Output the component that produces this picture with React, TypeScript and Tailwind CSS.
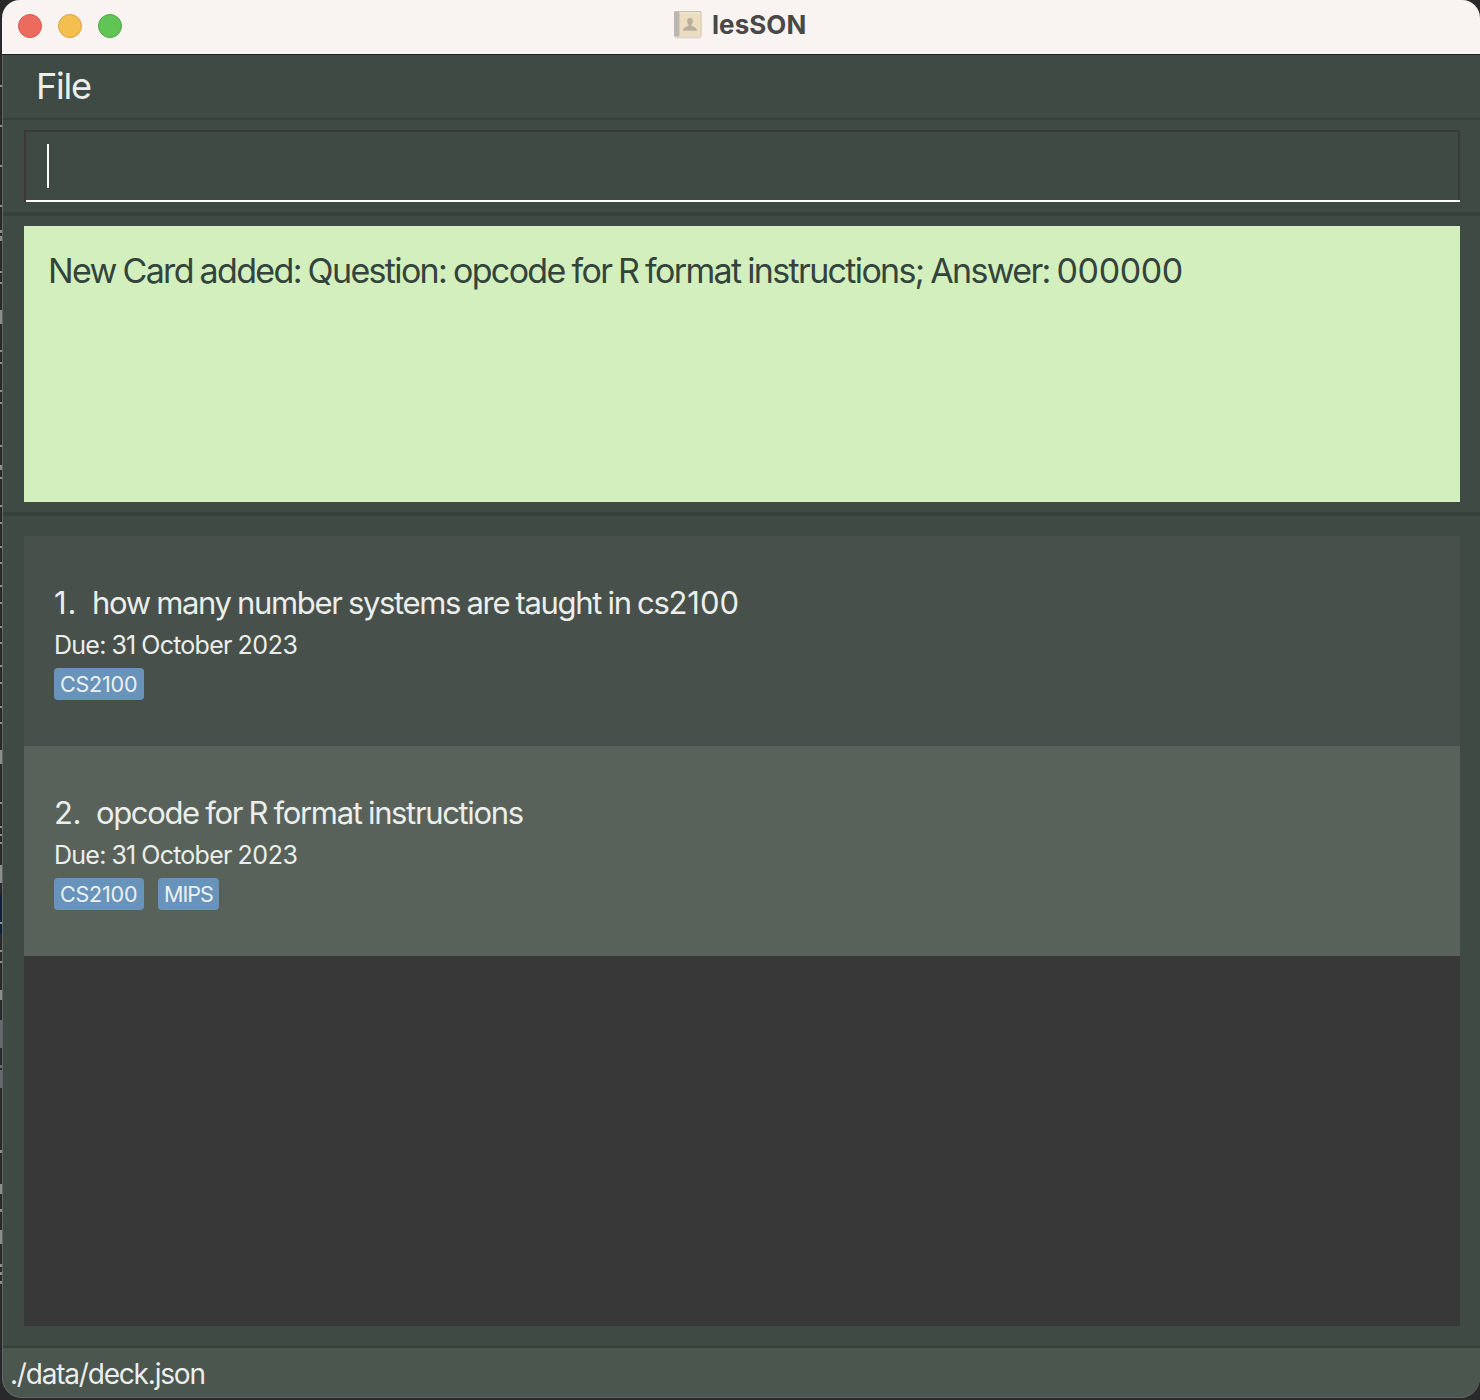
import React from "react";

const edgeMarks = [
  [85, 2], [125, 2], [165, 2], [205, 2], [230, 3], [236, 5], [271, 2], [282, 2], [310, 14], [350, 2],
  [362, 2], [390, 2], [402, 2], [445, 2], [465, 5], [477, 2], [505, 2], [522, 2], [546, 2], [562, 2],
  [585, 2], [602, 2], [626, 2], [642, 2], [665, 2], [682, 2], [706, 2], [722, 2], [750, 14], [802, 2],
  [826, 2], [834, 2], [842, 2], [865, 18], [922, 2], [950, 2], [961, 2], [990, 10],
  [1150, 3], [1184, 10], [1209, 3], [1230, 14], [1264, 3], [1272, 3], [1281, 3],
];

function Tag({ label, width, tracking }: { label: string; width: string; tracking: string }) {
  return (
    <span className={`flex h-8 items-center rounded bg-[#6893ba] pl-1.5 text-[21.5px] text-[#eef0ee] ${width} ${tracking}`}>
      {label}
    </span>
  );
}

function DueDate() {
  return (
    <p className="h-[42px] text-[25px] leading-[42px] tracking-[-0.75px] [word-spacing:-0.5px]">
      Due: 31 October <span className="tracking-[-0.4px]">2023</span>
    </p>
  );
}

function ContactIcon() {
  return (
    <svg width="30" height="30" viewBox="0 0 30 30" className="block">
      <rect x="1.500" y="2.500" width="27" height="26" rx="1.500" fill="#dfd8d2" />
      <rect x="1" y="1" width="27.500" height="25.500" rx="1.500" fill="#ecdcc0" />
      <rect x="1" y="1" width="5" height="25.500" rx="1" fill="#bcb6b2" />
      <path d="M6.500 1V26.500" stroke="#d8ccb9" />
      <path d="M2 1.500H28" stroke="#c9c0b6" />
      <path d="M7 3H27" stroke="#f3e9d4" />
      <path d="M28 2V26" stroke="#dccdb2" />
      <path d="M17 8c-2 0-3 1.400-2.800 3.500.1 1.500.8 2.300 1.300 3V16c-2.300.9-5.300 1.200-5.500 4.800h14c-.2-3.600-3.200-3.900-5.500-4.800v-1.500c.6-.7 1.200-1.500 1.300-3C20 9.400 19 8 17 8z" fill="#b9ad9b" />
    </svg>
  );
}

export default function App() {
  return (
    <div className="relative h-[1400px] w-[1480px] overflow-hidden bg-[#29292c] pl-0.5 font-['Inter',sans-serif]">
      <svg className="absolute left-0 top-0" width="2" height="1400">
        <rect y="894" width="2" height="40" fill="#10213a" />
        <rect y="1020" width="2" height="28" fill="#66696f" />
        <rect y="1065" width="2" height="3" fill="#66696f" />
        <rect y="1070" width="2" height="18" fill="#66696f" />
        {edgeMarks.map(([y, h]) => (
          <rect key={y} y={y} width="2" height={h} fill="#8d8f8f" />
        ))}
      </svg>
      <div className="relative flex h-[1398px] w-[1478px] flex-col overflow-hidden rounded-b-[20px] rounded-t-[18px] bg-[#3e4a43]">
        <header className="relative flex h-[54px] shrink-0 items-center bg-[#f9f4f1] pb-0.5">
          <div className="flex gap-4 pl-4">
            <i className="size-6 rounded-full border border-[#d8574c] bg-[#ed6a5f]" />
            <i className="size-6 rounded-full border border-[#d9a23c] bg-[#f5bf4f]" />
            <i className="size-6 rounded-full border border-[#4ea73f] bg-[#61c555]" />
          </div>
          <div className="absolute left-[671px] top-[10px]"><ContactIcon /></div>
          <h1 className="absolute left-[710px] top-[9px] whitespace-nowrap text-[26px] font-bold leading-8 tracking-[0.05px] text-[#4a4846]">lesSON</h1>
        </header>
        <nav className="flex h-16 shrink-0 items-center border-t border-[#1d2421] pb-0.5 pl-[34px] text-[36px] tracking-[-1.2px] text-[#eceeec]">File</nav>
        <div className="h-[94px] shrink-0 border-t-2 border-[#35413a] pl-[22px] pr-5 pt-2.5">
          <div className="h-[72px] border-x-2 border-t-2 border-[#3b3837]">
            <div className="-mr-0.5 h-[70px] border-b-2 border-white pl-[21px] pt-3">
              <div className="h-11 w-0.5 bg-white" />
            </div>
          </div>
        </div>
        <main className="flex shrink-0 flex-col">
          <section className="h-[300px] border-t-4 border-[#35413a] pl-[22px] pr-5 pt-2.5">
            <p className="h-[276px] whitespace-nowrap bg-[#d3efbd] pl-6 pt-6 text-[34px] leading-[42px] tracking-[-1.66px] text-[#33443d] [word-spacing:-1.1px]">
              New Card added: Question: opcode for R format instructions; Answer: <span className="tracking-[-0.4px]">000000</span>
            </p>
          </section>
          <section className="h-[834px] border-t-4 border-[#35413a] pl-[22px] pr-5 pt-5">
            <div className="h-[790px] bg-[#383838] text-[#eceeec]">
              <article className="h-[210px] bg-[#47504a] pl-[30px] pt-[46px]">
                <h2 className="flex h-[42px] items-center whitespace-nowrap text-[31px]">
                  <span className="w-[38px] tracking-[1px]">1.</span>
                  <span className="tracking-[-1.35px] [word-spacing:-0.9px]">how many number systems are taught in cs<span className="tracking-[0px]">2100</span></span>
                </h2>
                <DueDate />
                <div className="mt-0.5 flex gap-3.5"><Tag label="CS2100" width="w-[90px]" tracking="tracking-[-0.2px]" /></div>
              </article>
              <article className="h-[210px] bg-[#58625a] pl-[30px] pt-[46px]">
                <h2 className="flex h-[42px] items-center whitespace-nowrap text-[31px]">
                  <span className="w-[42px] tracking-[-0.5px]">2.</span>
                  <span className="tracking-[-1.35px] [word-spacing:-0.9px]">opcode for R format instructions</span>
                </h2>
                <DueDate />
                <div className="mt-0.5 flex gap-3.5">
                  <Tag label="CS2100" width="w-[90px]" tracking="tracking-[-0.2px]" />
                  <Tag label="MIPS" width="w-[61px]" tracking="tracking-[-1px]" />
                </div>
              </article>
            </div>
          </section>
        </main>
        <footer className="flex flex-1 items-center border-t-2 border-[#35413a] bg-[#4a564e] pb-px pl-2 pt-[3px] text-[28px] tracking-[-1.2px] text-[#eceeec]">./data/deck.json</footer>
        <div className="pointer-events-none absolute inset-x-0 bottom-0 top-[55px] rounded-b-[20px] border-b border-l border-[#5d6862]" />
      </div>
    </div>
  );
}
